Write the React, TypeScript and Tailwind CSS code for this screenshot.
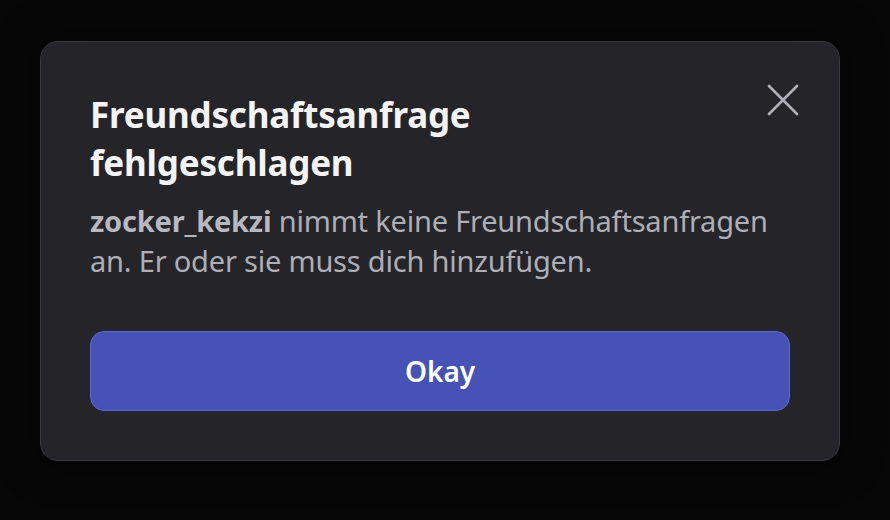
export default function App() {
  return (
    <div
      className="w-[890px] h-[520px] bg-[#070708] pt-[41px] pl-[40px]"
      style={{ fontFamily: '"Noto Sans", "Open Sans", sans-serif' }}
    >
      <div className="relative w-[800px] h-[420px] rounded-[18px] border border-[#38383e] bg-[#242429] px-[49px] pt-[49px] pb-[49px] flex flex-col shadow-[0_0_40px_rgba(0,0,0,0.6)]">
        <button className="absolute top-[40px] right-[38px] text-[#b0b0b8]" aria-label="Schließen">
          <svg width="36" height="36" viewBox="0 0 36 36" fill="none" stroke="currentColor" strokeWidth="2.6" strokeLinecap="round">
            <line x1="4" y1="4" x2="32" y2="32" />
            <line x1="32" y1="4" x2="4" y2="32" />
          </svg>
        </button>

        <h1 className="text-[35px] leading-[48px] font-bold text-[#f4f4f6] w-[520px] tracking-[-0.2px]">
          Freundschaftsanfrage fehlgeschlagen
        </h1>

        <p className="mt-[14px] text-[29px] leading-[40px] text-[#aeaeb6] tracking-[-0.2px]">
          <span className="font-bold text-[#b8b8c0]">zocker_kekzi</span>{" "}
          nimmt keine Freundschaftsanfragen an. Er oder sie muss dich hinzufügen.
        </p>

        <button className="mt-auto h-[80px] w-full rounded-[14px] border border-[#5966d4] bg-[#4752b7] text-[28px] font-semibold text-white">
          Okay
        </button>
      </div>
    </div>
  );
}
